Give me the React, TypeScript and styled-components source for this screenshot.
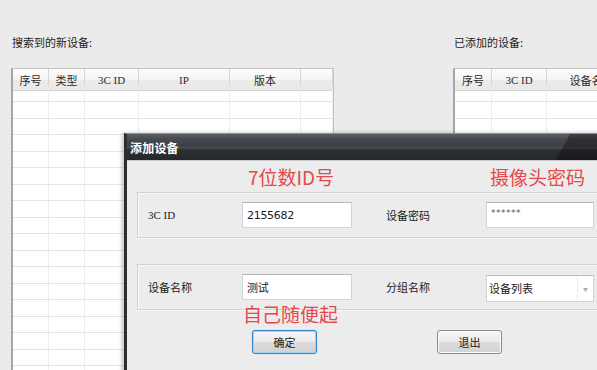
import React from 'react';
import styled, { createGlobalStyle } from 'styled-components';

const GlobalStyle = createGlobalStyle`
  html, body {
    margin: 0;
    padding: 0;
    background: #ebebeb;
  }
  body {
    font-family: 'Noto Sans CJK SC', 'Liberation Sans', sans-serif;
    color: #1e1e1e;
  }
`;

const cjk = `'Noto Sans CJK SC', 'Liberation Sans', sans-serif`;
const simsunLike = `'Liberation Serif', 'Noto Sans CJK SC', serif`;

const Screen = styled.div`
  position: relative;
  width: 597px;
  height: 370px;
  overflow: hidden;
  background: #ebebeb;
`;

const Panels = styled.div`
  display: flex;
  gap: 119px;
  padding: 34px 0 0 11px;
`;

const Panel = styled.section<{ $width: number }>`
  flex: 0 0 ${(p) => p.$width}px;
  display: flex;
  flex-direction: column;
`;

const Caption = styled.div`
  height: 16px;
  line-height: 16px;
  padding-left: 1px;
  font-family: ${cjk};
  font-size: 11px;
  color: #222;
`;

const Table = styled.div<{ $cols: string }>`
  margin-top: 18px;
  display: grid;
  grid-template-columns: ${(p) => p.$cols};
  grid-auto-rows: 16.5px;
  background: #fff;
  border: 1px solid #c4c4c4;
  border-left: 2px solid #a6a6a6;
  height: 400px;
  align-content: start;
`;

const HeadCell = styled.div`
  height: 22px;
  box-sizing: border-box;
  display: flex;
  align-items: center;
  justify-content: center;
  font-family: ${simsunLike};
  font-size: 11px;
  color: #2a2a2a;
  background: linear-gradient(#fdfdfd 0%, #f4f4f4 50%, #ebebeb 52%, #e9e9e9 100%);
  border-right: 1px solid #d6d6d6;
  border-bottom: 1px solid #d2d2d2;
  white-space: nowrap;
  overflow: hidden;
`;

const Cell = styled.div`
  box-sizing: border-box;
  border-right: 1px solid #ededed;
  border-bottom: 1px solid #e4e4e4;
`;

const HeadRow = styled.div`
  display: contents;
`;

const Dialog = styled.div`
  position: absolute;
  left: 124px;
  top: 133px;
  width: 500px;
  height: 260px;
  display: flex;
  flex-direction: column;
  border-left: 3px solid #2c2e32;
  border-top: 1px solid #8d9094;
  background: #ececec;
  box-shadow: -2px 0 4px rgba(0, 0, 0, 0.25);
`;

const TitleBar = styled.div`
  position: relative;
  height: 26px;
  display: flex;
  align-items: center;
  padding-left: 3px;
  background: linear-gradient(
    #5c5f64 0%,
    #46494e 20%,
    #3c3f44 48%,
    #4a4d52 52%,
    #2d2f33 62%,
    #26282b 100%
  );
  color: #fff;
  font-family: ${cjk};
  font-size: 12px;
  font-weight: bold;
  letter-spacing: 0.2px;

  &::after {
    content: '';
    position: absolute;
    inset: 0;
    background: rgba(0, 0, 0, 0.32);
    clip-path: polygon(443px 0, 100% 0, 100% 100%, 429px 100%);
  }
`;

const Body = styled.div`
  flex: 1;
  display: flex;
  flex-direction: column;
  padding: 3px 10px 0 10px;
  border-top: 1px solid #c8c8c8;
`;

const NoteRow = styled.div<{ $indent: number; $cols: string; $shift?: number }>`
  display: grid;
  grid-template-columns: ${(p) => p.$cols};
  padding-left: ${(p) => p.$indent}px;
  margin-top: ${(p) => p.$shift ?? 0}px;
  height: 25px;
  position: relative;
  z-index: 1;
`;

const Note = styled.span`
  font-family: ${cjk};
  font-size: 19px;
  line-height: 25px;
  color: #e34a4d;
  white-space: nowrap;
`;

const GroupBox = styled.div<{ $gap: number }>`
  margin-top: ${(p) => p.$gap}px;
  height: 46px;
  box-sizing: border-box;
  display: flex;
  align-items: center;
  padding: 0 10px;
  border: 1px solid #d2d2d2;
  box-shadow: inset 1px 1px 0 #f8f8f8, 1px 1px 0 #f8f8f8;
`;

const Label = styled.div<{ $width: number; $offset?: number }>`
  width: ${(p) => p.$width}px;
  margin-left: ${(p) => p.$offset ?? 0}px;
  font-family: ${simsunLike};
  font-size: 11px;
  color: #222;
  flex-shrink: 0;
`;

const TextBox = styled.div<{ $width: number; $muted?: boolean }>`
  width: ${(p) => p.$width}px;
  height: 26px;
  box-sizing: border-box;
  flex-shrink: 0;
  display: flex;
  align-items: ${(p) => (p.$muted ? 'flex-start' : 'center')};
  padding: ${(p) => (p.$muted ? '5px 4px 0' : '0 4px')};
  background: #fff;
  border: 1px solid #d0d3d8;
  border-top-color: #b3b6bb;
  font-family: 'DejaVu Sans', ${cjk};
  font-size: ${(p) => (p.$muted ? '9px' : '11px')};
  color: ${(p) => (p.$muted ? '#555' : '#1b1b1b')};
  letter-spacing: ${(p) => (p.$muted ? '0.5px' : '-0.3px')};
`;

const Select = styled.div<{ $width: number }>`
  width: ${(p) => p.$width}px;
  height: 27px;
  margin-top: 2px;
  box-sizing: border-box;
  flex-shrink: 0;
  display: flex;
  background: #fff;
  border: 1px solid #d0d3d8;
  border-top-color: #b8bbc0;
  font-family: ${cjk};
  font-size: 11px;
  color: #1b1b1b;
`;

const SelectText = styled.div`
  flex: 1;
  display: flex;
  align-items: center;
  padding-left: 2px;
`;

const SelectArrow = styled.div`
  width: 15px;
  display: flex;
  align-items: center;
  justify-content: center;
  border-left: 1px solid #ececec;
  color: #a8a8a8;
  font-size: 5px;
`;

const ButtonRow = styled.div`
  display: grid;
  grid-template-columns: 185px 65px;
  padding-left: 115px;
  margin-top: 4px;
`;

const Button = styled.div<{ $focused?: boolean }>`
  width: 65px;
  height: 24px;
  box-sizing: border-box;
  display: flex;
  align-items: center;
  justify-content: center;
  border-radius: 3px;
  border: 1px solid ${(p) => (p.$focused ? '#3d84c6' : '#8a8a8a')};
  background: linear-gradient(#f6f6f6 0%, #ebebeb 48%, #dcdcdc 52%, #d2d2d2 100%);
  box-shadow: ${(p) =>
    p.$focused
      ? 'inset 0 0 0 1px #9fd3f4, 0 0 1px #5aa6e0'
      : 'inset 0 0 0 1px #fbfbfb'};
  font-family: ${cjk};
  font-size: 11px;
  color: #1a1a1a;
`;

const leftCols = '36px 36px 54px 91px 71px 1fr';
const leftHead = ['序号', '类型', '3C ID', 'IP', '版本', ''];
const rightCols = '37px 55px 90px 1fr';
const rightHead = ['序号', '3C ID', '设备名称', ''];

function DeviceTable({ cols, head, rows }: { cols: string; head: string[]; rows: number }) {
  return (
    <Table $cols={cols}>
      <HeadRow>
        {head.map((h, i) => (
          <HeadCell key={i}>{h}</HeadCell>
        ))}
      </HeadRow>
      {Array.from({ length: rows * head.length }).map((_, i) => (
        <Cell key={i} />
      ))}
    </Table>
  );
}

export default function App() {
  return (
    <>
      <GlobalStyle />
      <Screen>
        <Panels>
          <Panel $width={323}>
            <Caption>搜索到的新设备:</Caption>
            <DeviceTable cols={leftCols} head={leftHead} rows={18} />
          </Panel>
          <Panel $width={220}>
            <Caption>已添加的设备:</Caption>
            <DeviceTable cols={rightCols} head={rightHead} rows={6} />
          </Panel>
        </Panels>

        <Dialog>
          <TitleBar>添加设备</TitleBar>
          <Body>
            <NoteRow $indent={111} $cols="242px auto">
              <Note>7位数ID号</Note>
              <Note>摄像头密码</Note>
            </NoteRow>
            <GroupBox $gap={3}>
              <Label $width={94}>3C ID</Label>
              <TextBox $width={110}>2155682</TextBox>
              <Label $width={100} $offset={34}>设备密码</Label>
              <TextBox $width={108} $muted>******</TextBox>
            </GroupBox>
            <GroupBox $gap={26}>
              <Label $width={94}>设备名称</Label>
              <TextBox $width={110}>测试</TextBox>
              <Label $width={100} $offset={34}>分组名称</Label>
              <Select $width={108}>
                <SelectText>设备列表</SelectText>
                <SelectArrow>▼</SelectArrow>
              </Select>
            </GroupBox>
            <NoteRow $indent={106} $cols="auto" $shift={-9}>
              <Note>自己随便起</Note>
            </NoteRow>
            <ButtonRow>
              <Button $focused>确定</Button>
              <Button>退出</Button>
            </ButtonRow>
          </Body>
        </Dialog>
      </Screen>
    </>
  );
}
